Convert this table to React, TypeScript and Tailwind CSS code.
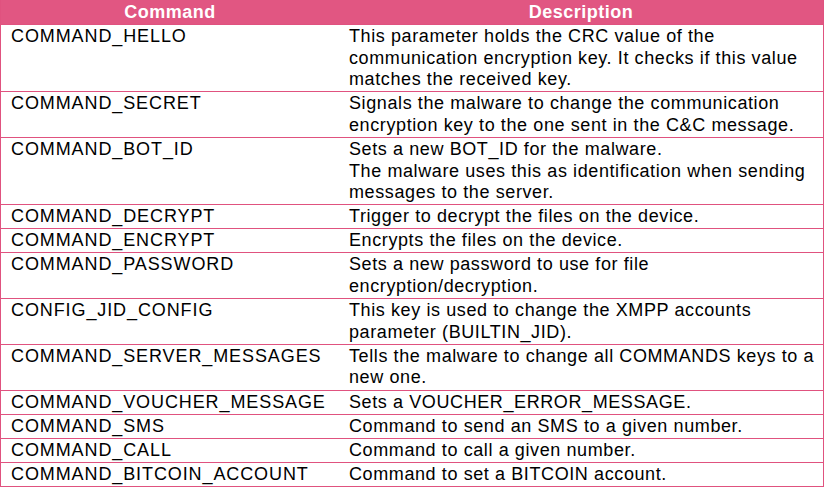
import React from "react";

const rows: [string, string[]][] = [
  ["COMMAND_HELLO", ["This parameter holds the CRC value of the", "communication encryption key. It checks if this value", "matches the received key."]],
  ["COMMAND_SECRET", ["Signals the malware to change the communication", "encryption key to the one sent in the C&C message."]],
  ["COMMAND_BOT_ID", ["Sets a new BOT_ID for the malware.", "The malware uses this as identification when sending", "messages to the server."]],
  ["COMMAND_DECRYPT", ["Trigger to decrypt the files on the device."]],
  ["COMMAND_ENCRYPT", ["Encrypts the files on the device."]],
  ["COMMAND_PASSWORD", ["Sets a new password to use for file", "encryption/decryption."]],
  ["CONFIG_JID_CONFIG", ["This key is used to change the XMPP accounts", "parameter (BUILTIN_JID)."]],
  ["COMMAND_SERVER_MESSAGES", ["Tells the malware to change all COMMANDS keys to a", "new one."]],
  ["COMMAND_VOUCHER_MESSAGE", ["Sets a VOUCHER_ERROR_MESSAGE."]],
  ["COMMAND_SMS", ["Command to send an SMS to a given number."]],
  ["COMMAND_CALL", ["Command to call a given number."]],
  ["COMMAND_BITCOIN_ACCOUNT", ["Command to set a BITCOIN account."]],
];

export default function App() {
  return (
    <div className="w-[825px] h-[488px] bg-white" style={{ fontFamily: '"Liberation Sans", Arial, sans-serif' }}>
      <div className="w-[824px] border-x border-[#e0527f]">
        <div className="flex h-[24px] bg-[#e15682] text-white font-bold text-[18px] leading-[24px] tracking-[0.5px]">
          <div className="w-[338px] text-center">Command</div>
          <div className="flex-1 text-center">Description</div>
        </div>
        {rows.map(([cmd, desc]) => (
          <div key={cmd} className="flex border-t border-[#e0527f] pt-[1px] pb-[0.5px] text-[18px] leading-[21.6px] text-black">
            <div className="w-[338px] pl-[10px] tracking-[0.9px]">{cmd}</div>
            <div className="flex-1 pl-[10px] tracking-[0.6px]">
              {desc.map((d, i) => (
                <div key={i} className="whitespace-nowrap">{d}</div>
              ))}
            </div>
          </div>
        ))}
        <div className="border-t border-[#e0527f]" />
      </div>
    </div>
  );
}
